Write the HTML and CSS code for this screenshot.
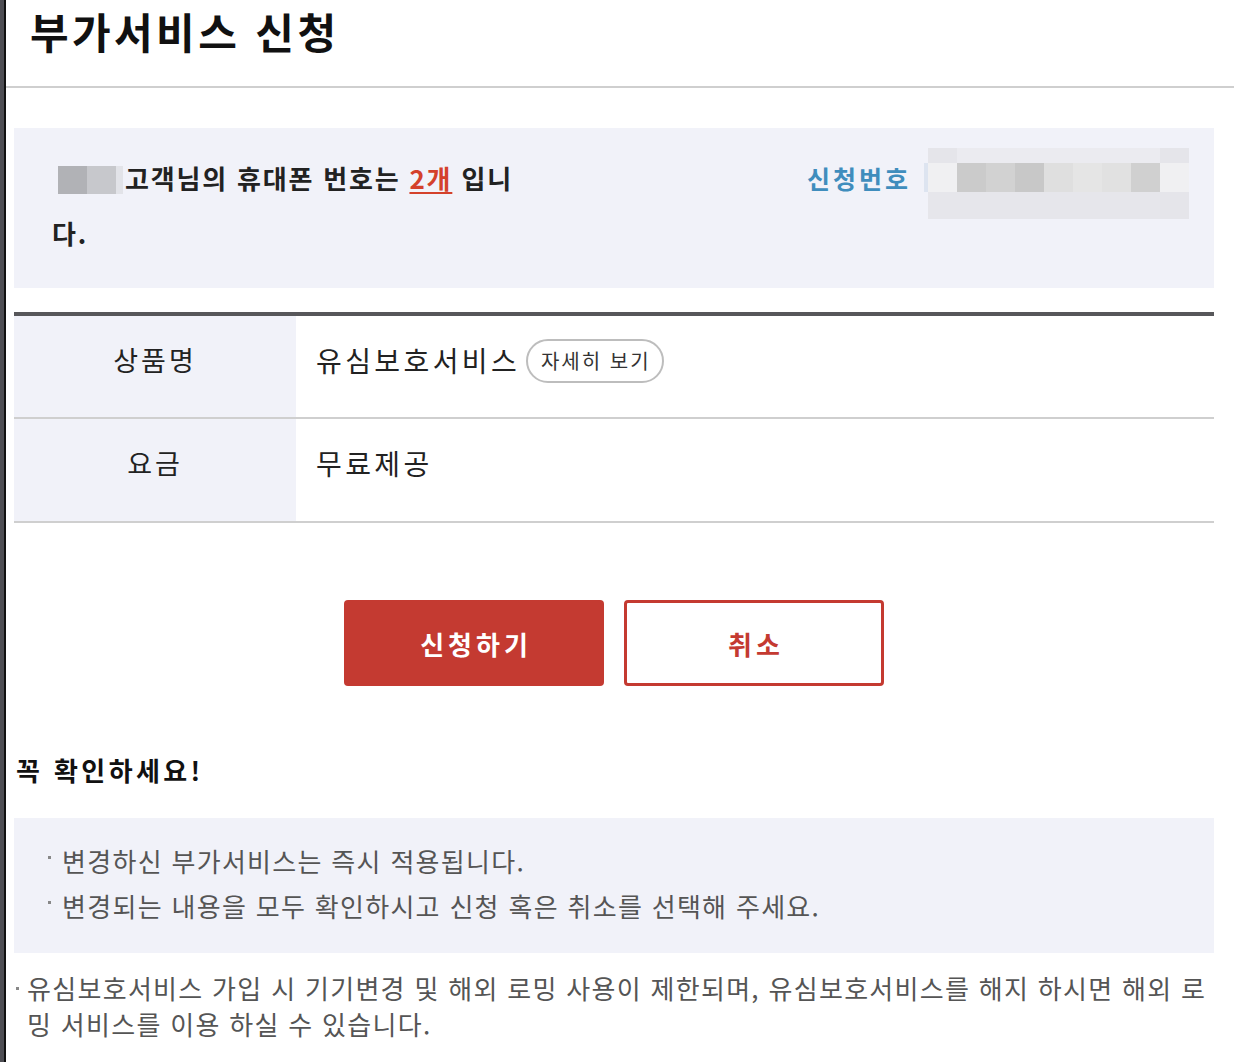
FILE: index.html
```html
<!DOCTYPE html>
<html lang="ko">
<head>
<meta charset="utf-8">
<title>부가서비스 신청</title>
<link rel="stylesheet" href="styles.css">
</head>
<body>
<div class="frame">
  <div class="page">
    <header class="page-header">
      <h1 class="page-title">부가서비스 신청</h1>
    </header>
    <main class="content">
      <section class="info-box">
        <p class="info-text"><span class="name-mask"><span class="m1"></span><span class="m2"></span><span class="m3"></span></span>고객님의 휴대폰 번호는 <em class="count">2개</em> 입니다.</p>
        <div class="apply-no">
          <span class="apply-label">신청번호</span>
          <span class="apply-sep"></span>
          <div class="mosaic">
            <span class="c-a"></span><span class="c-b"></span><span class="c-b"></span><span class="c-b"></span><span class="c-b"></span><span class="c-b"></span><span class="c-b"></span><span class="c-b"></span><span class="c-a"></span>
            <span class="c-e"></span><span class="c-g1"></span><span class="c-g2"></span><span class="c-g3"></span><span class="c-g4"></span><span class="c-g5"></span><span class="c-g6"></span><span class="c-g7"></span><span class="c-e"></span>
            <span class="c-c"></span><span class="c-c"></span><span class="c-c"></span><span class="c-c"></span><span class="c-c"></span><span class="c-c"></span><span class="c-c"></span><span class="c-c"></span><span class="c-a"></span>
          </div>
        </div>
      </section>

      <table class="product-table">
        <tr>
          <th>상품명</th>
          <td><span class="product-name">유심보호서비스</span> <button class="detail-btn" type="button">자세히 보기</button></td>
        </tr>
        <tr>
          <th>요금</th>
          <td><span class="product-name">무료제공</span></td>
        </tr>
      </table>

      <div class="actions">
        <button class="btn btn-primary" type="button">신청하기</button>
        <button class="btn btn-outline" type="button">취소</button>
      </div>

      <h2 class="notice-title">꼭 확인하세요!</h2>
      <ul class="notice-box">
        <li>변경하신 부가서비스는 즉시 적용됩니다.</li>
        <li>변경되는 내용을 모두 확인하시고 신청 혹은 취소를 선택해 주세요.</li>
      </ul>
      <p class="footnote">유심보호서비스 가입 시 기기변경 및 해외 로밍 사용이 제한되며, 유심보호서비스를 해지 하시면 해외 로밍 서비스를 이용 하실 수 있습니다.</p>
    </main>
  </div>
</div>
</body>
</html>
```

FILE: styles.css
```css
* { box-sizing: border-box; }

html, body {
  margin: 0;
  padding: 0;
  background: #ffffff;
}

body {
  font-family: "Noto Sans CJK KR", "Noto Sans", sans-serif;
  color: #222;
}

.frame {
  border-left: 4px solid #4e4e54;
  min-height: 1062px;
}

.page {
  border-left: 2px solid #111;
  min-height: 1062px;
}

.page-header {
  height: 88px;
  border-bottom: 2px solid #cfcfcf;
  padding-left: 24px;
}

.page-title {
  margin: 0;
  font-size: 42px;
  line-height: 62px;
  letter-spacing: 3.4px;
  font-weight: 700;
  color: #111;
}

.content {
  padding: 40px 20px 0 8px;
}

/* info box */
.info-box {
  display: flex;
  justify-content: space-between;
  align-items: flex-start;
  height: 160px;
  background: #f1f2f9;
}

.info-text {
  margin: 0;
  width: 508px;
  padding: 22px 0 0 38px;
  font-size: 26px;
  line-height: 55px;
  letter-spacing: 1.8px;
  font-weight: 700;
  color: #222;
}

.name-mask {
  display: inline-flex;
  vertical-align: middle;
  margin: -4px 2px 0 6px;
  height: 28px;
}
.name-mask span { display: block; height: 28px; }
.name-mask .m1 { width: 29px; background: #b1b2b6; }
.name-mask .m2 { width: 29px; background: #c7c8cc; }
.name-mask .m3 { width: 7px; background: #e2e3e8; }

.count {
  font-style: normal;
  color: #d4412b;
  text-decoration: underline;
  text-underline-offset: 3px;
}

.apply-no {
  display: flex;
  align-items: flex-start;
  padding: 20px 25px 0 0;
}

.apply-label {
  font-size: 25px;
  line-height: 60px;
  letter-spacing: 3px;
  font-weight: 700;
  color: #3f8dbd;
  margin-right: 13px;
}

.apply-sep {
  width: 4px;
  height: 29px;
  margin-top: 15px;
  background: #dde4f0;
}

.mosaic {
  display: grid;
  grid-template-columns: repeat(9, 29px);
  grid-template-rows: 15px 29px 27px;
}
.mosaic .c-a { background: #e5e5ea; }
.mosaic .c-b { background: #ebebf0; }
.mosaic .c-c { background: #e6e6eb; }
.mosaic .c-e { background: #f0f0f2; }
.mosaic .c-g1 { background: #cbcbcb; }
.mosaic .c-g2 { background: #d2d2d2; }
.mosaic .c-g3 { background: #c8c8c8; }
.mosaic .c-g4 { background: #dfdfdf; }
.mosaic .c-g5 { background: #e5e5e5; }
.mosaic .c-g6 { background: #e1e1e1; }
.mosaic .c-g7 { background: #d0d0d0; }

/* table */
.product-table {
  width: 100%;
  margin-top: 24px;
  border-collapse: collapse;
  border-top: 4px solid #57575a;
}

.product-table tr {
  border-bottom: 2px solid #cfcfcf;
}

.product-table th,
.product-table td {
  height: 104px;
  padding: 26px 20px 0;
  vertical-align: top;
  line-height: 36px;
}

.product-table th {
  width: 282px;
  background: #f1f2f9;
  font-size: 27px;
  letter-spacing: 3px;
  font-weight: 400;
  color: #222;
  text-align: center;
}

.product-table td {
  font-size: 28px;
  color: #222;
}

.product-name {
  letter-spacing: 3.4px;
}

.detail-btn {
  display: inline-block;
  vertical-align: top;
  margin: -3px 0 0 -2px;
  height: 44px;
  padding: 0 11px 0 13px;
  border: 2px solid #bdbdbd;
  border-radius: 22px;
  background: #fff;
  font-family: inherit;
  font-size: 20px;
  letter-spacing: 2px;
  line-height: 38px;
  color: #333;
}

/* buttons */
.actions {
  display: flex;
  justify-content: center;
  gap: 20px;
  margin-top: 77px;
}

.btn {
  width: 260px;
  height: 86px;
  border-radius: 4px;
  font-family: inherit;
  font-size: 26px;
  letter-spacing: 4px;
  text-indent: 4px;
  font-weight: 700;
}

.btn-primary {
  background: #c43a31;
  border: 0;
  color: #fff;
}

.btn-outline {
  background: #fff;
  border: 3px solid #c43a31;
  color: #c43a31;
}

/* notice */
.notice-title {
  margin: 68px 0 0;
  padding-left: 2px;
  font-size: 26px;
  line-height: 32px;
  letter-spacing: 3.4px;
  font-weight: 700;
  color: #111;
}

.notice-box {
  list-style: none;
  margin: 32px 0 0;
  padding: 20px 0 25px 34px;
  background: #f1f2f9;
}

.notice-box li {
  font-size: 26px;
  line-height: 45px;
  letter-spacing: 1.3px;
  color: #555;
}

.notice-box li::before {
  content: "";
  display: inline-block;
  width: 3px;
  height: 3px;
  margin: 0 11px 0 0;
  vertical-align: 13px;
  background: #888;
}

.footnote {
  position: relative;
  margin: 17px 0 0;
  padding-left: 13px;
  font-size: 26px;
  line-height: 36px;
  letter-spacing: 1.3px;
  color: #555;
}

.footnote::before {
  content: "";
  position: absolute;
  left: 2px;
  top: 17px;
  width: 3px;
  height: 3px;
  background: #888;
}
```
